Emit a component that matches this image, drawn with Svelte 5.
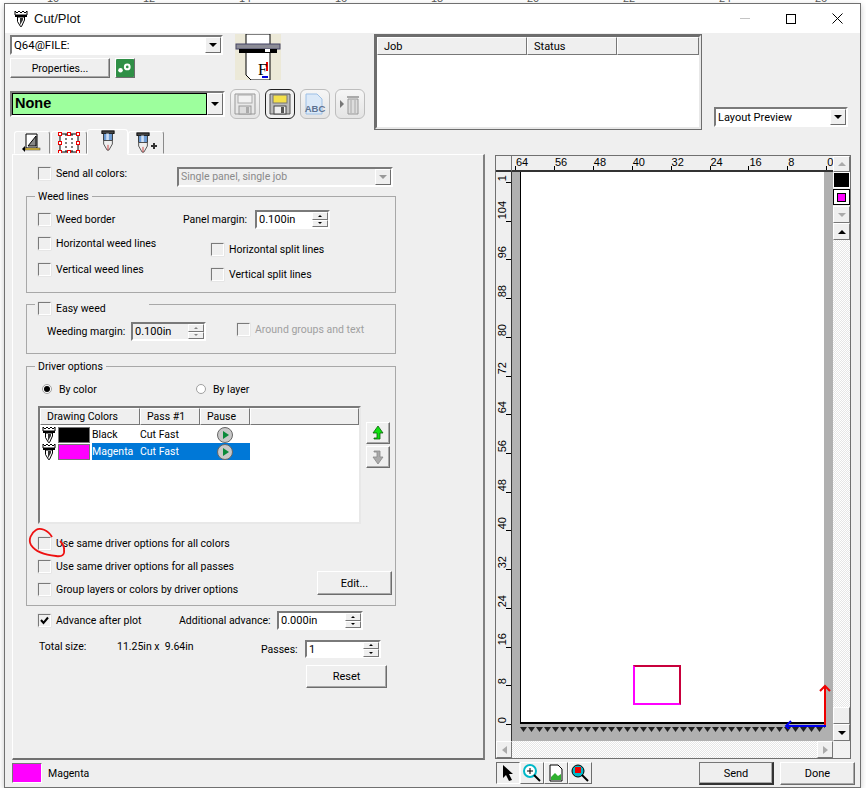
<script>
  const topTicks = [64, 56, 48, 40, 32, 24, 16, 8, 0];
  const sideTicks = ['1', 104, 96, 88, 80, 72, 64, 56, 48, 40, 32, 24, 16, 8, 0];
  const bgLabels = [10, 12, 14, 16, 18, 20, 22, 24, 26];
  const colors = [
    { name: 'Black', color: '#000' },
    { name: 'Magenta', color: '#ff00ff', selected: true }
  ];
</script>

{#snippet check(label, on = false, off = false)}
  <div class="check" class:off>
    <span class="box">
      {#if on}
        <svg width="9" height="9" viewBox="0 0 9 9"><path d="M1 4l2.500 3L8 1.500" fill="none" stroke="#000" stroke-width="2"/></svg>
      {/if}
    </span>
    <span>{label}</span>
  </div>
{/snippet}

{#snippet spin(value, off = false)}
  <div class="spin" class:off>
    <span class="spin-val">{value}</span>
    <span class="spin-btns">
      <span class="spin-btn"><i class="up"></i></span>
      <span class="spin-btn"><i class="down"></i></span>
    </span>
  </div>
{/snippet}

{#snippet knife()}
  <svg width="14" height="17" viewBox="0 0 14 17">
    <path d="M1 1l2 2 2-2 2 2 2-2 2 2 2-2v4H1z" fill="#fff" stroke="#000"/>
    <rect x="1" y="5" width="12" height="2" fill="#000"/>
    <path d="M3.500 7h7v3l-3 6.500h-1l-3-5z" fill="#fff" stroke="#000"/>
    <path d="M6 8v7l3-5V8z" fill="#333"/>
  </svg>
{/snippet}

{#snippet pen()}
  <svg width="14" height="21" viewBox="0 0 16 24">
    <rect x="1" y="1" width="14" height="3" fill="#444" stroke="#000" stroke-width="1"/>
    <rect x="3" y="4" width="10" height="8" fill="#6f9fd8" stroke="#222"/>
    <rect x="6" y="4" width="3" height="8" fill="#cfe0f4"/>
    <path d="M3 12h10v4l-4 7H7l-4-7z" fill="#eee" stroke="#444"/>
    <path d="M8 17v6" stroke="#c33" stroke-width="1"/>
  </svg>
{/snippet}

<div class="bgticks">
  {#each bgLabels as n}<span>{n}</span>{/each}
</div>

<div class="window">
  <div class="titlebar">
    <span class="title-icon">{@render knife()}</span>
    <span class="title">Cut/Plot</span>
    <span class="winbtn min"></span>
    <span class="winbtn"><svg width="10" height="10"><rect x=".5" y=".5" width="9" height="9" fill="none" stroke="#000"/></svg></span>
    <span class="winbtn"><svg width="11" height="11"><path d="M.5.500l10 10M10.500.500l-10 10" stroke="#000"/></svg></span>
  </div>

  <div class="content">
    <div class="top">
      <div class="tools">
        <div class="tools-row">
          <div class="device">
            <div class="combo device-combo"><span class="combo-val">Q64@FILE:</span><span class="arrow-btn"><i class="down big"></i></span></div>
            <div class="device-btns">
              <button class="btn props">Properties...</button>
              <button class="btn gear">
                <svg width="18" height="18" viewBox="0 0 16 16">
                  <rect width="16" height="16" rx="1" fill="#2f8f46"/>
                  <circle cx="10" cy="7" r="3" fill="#fff"/><circle cx="10" cy="7" r="1.200" fill="#2f8f46"/>
                  <circle cx="4" cy="10" r="2" fill="#fff"/>
                </svg>
              </button>
            </div>
          </div>
          <div class="plotter">
            <svg width="46" height="46" viewBox="0 0 46 46">
              <rect width="46" height="46" fill="#ece9d8"/>
              <path d="M11 0h24v46H16l-5-5z" fill="#fff" stroke="#000"/>
              <rect x="1" y="10" width="44" height="5" fill="#8c8c96" stroke="#446"/>
              <rect x="4" y="15" width="38" height="4" fill="#000"/>
              <rect x="30" y="15" width="5" height="3" fill="#fff"/>
              <path d="M32 37v-9" stroke="#e00" stroke-width="2"/>
              <path d="M27 43h6" stroke="#00d" stroke-width="2"/>
            </svg>
            <span class="plotter-f">F</span>
          </div>
        </div>
        <div class="tools-row second">
          <div class="combo none-combo"><span class="none-val">None</span><span class="arrow-btn tall"><i class="down big"></i></span></div>
          <div class="icon-btns">
            <button class="round">
              <svg width="22" height="22" viewBox="0 0 22 22"><path d="M1 1h20v20H1z" fill="#e8e8e8" stroke="#999"/><rect x="4" y="2" width="14" height="8" fill="#f2f2f2" stroke="#aaa"/><rect x="5" y="13" width="12" height="8" fill="#ddd" stroke="#999"/><rect x="12" y="14" width="3" height="6" fill="#aaa"/></svg>
            </button>
            <button class="round active">
              <svg width="22" height="22" viewBox="0 0 22 22"><path d="M1 1h20v20H1z" fill="#bbb" stroke="#555"/><rect x="4" y="2" width="14" height="8" fill="#f4e04a" stroke="#777"/><rect x="5" y="13" width="12" height="8" fill="#eee" stroke="#444"/><rect x="12" y="14" width="3" height="6" fill="#555"/></svg>
            </button>
            <button class="round abc">
              <svg class="abc-page" width="18" height="22" viewBox="0 0 18 22"><path d="M1 1h11l5 5v15H1z" fill="#dbe9f8" stroke="#9dc0e6"/></svg>
              <span class="abc-text">ABC</span>
            </button>
            <button class="round">
              <svg width="22" height="22" viewBox="0 0 22 22"><path d="M1 7l4 4-4 4z" fill="#777"/><rect x="8" y="3" width="12" height="2" fill="#aaa"/><path d="M9 6h10v15H9z" fill="#ddd" stroke="#999"/><path d="M12 7v13M16 7v13" stroke="#aaa"/></svg>
            </button>
          </div>
        </div>
      </div>

      <div class="jobs">
        <div class="jobs-head">
          <span class="hcell job">Job</span><span class="hcell status">Status</span><span class="hcell rest"></span>
        </div>
      </div>

      <div class="combo preview"><span class="combo-val">Layout Preview</span><span class="arrow-btn"><i class="down big"></i></span></div>
    </div>

    <div class="tabs">
      <div class="tab">
        <svg width="20" height="20" viewBox="0 0 20 20">
          <path d="M4 1h11v14H4z" fill="#fff" stroke="#000"/>
          <path d="M14 3L6 13h8z" fill="#888" stroke="#000"/>
          <rect x="3" y="15" width="15" height="2" fill="#e8c33a" stroke="#333" stroke-width=".5"/>
          <path d="M0 16l3-3v6z" fill="#000"/>
        </svg>
      </div>
      <div class="tab t2">
        <svg width="22" height="22" viewBox="0 0 22 22">
          <rect x="2" y="2" width="18" height="18" fill="#fff" stroke="#000"/>
          <path d="M8 2v18M14 2v18" stroke="#000" stroke-dasharray="2 2"/>
          <g fill="#fff" stroke="#e00"><rect x="0.500" y="0.500" width="3" height="3"/><rect x="9.500" y="0.500" width="3" height="3"/><rect x="18.500" y="0.500" width="3" height="3"/><rect x="0.500" y="9.500" width="3" height="3"/><rect x="18.500" y="9.500" width="3" height="3"/><rect x="0.500" y="18.500" width="3" height="3"/><rect x="9.500" y="18.500" width="3" height="3"/><rect x="18.500" y="18.500" width="3" height="3"/></g>
        </svg>
      </div>
      <div class="tab active">{@render pen()}</div>
      <div class="tab t4">
        {@render pen()}
        <svg class="plus" width="8" height="8" viewBox="0 0 8 8"><path d="M4 1v6M1 4h6" stroke="#333" stroke-width="2"/></svg>
      </div>
    </div>

    <div class="main">
      <div class="leftcol">
        <div class="panel">
          <div class="send-row">
            {@render check('Send all colors:')}
            <div class="combo send-combo"><span class="combo-val grey">Single panel, single job</span><span class="arrow-btn dim"><i class="down big"></i></span></div>
          </div>

          <div class="group weed">
            <div class="legend">Weed lines</div>
            <div class="weed-cols">
              <div class="weed-left">
                {@render check('Weed border')}
                {@render check('Horizontal weed lines')}
                {@render check('Vertical weed lines')}
              </div>
              <div class="weed-right">
                <div class="field"><span class="field-label">Panel margin:</span>{@render spin('0.100in')}</div>
                <div class="splits">
                  {@render check('Horizontal split lines')}
                  {@render check('Vertical split lines')}
                </div>
              </div>
            </div>
          </div>

          <div class="group easy">
            <div class="legend check-legend">{@render check('Easy weed')}</div>
            <div class="easy-row">
              <div class="field"><span class="field-label">Weeding margin:</span>{@render spin('0.100in', true)}</div>
              <div class="around">{@render check('Around groups and text', false, true)}</div>
            </div>
          </div>

          <div class="group driver">
            <div class="legend">Driver options</div>
            <div class="radios">
              <div class="radio"><span class="dot on"></span>By color</div>
              <div class="radio"><span class="dot"></span>By layer</div>
            </div>
            <div class="list-row">
              <div class="list">
                <div class="list-head">
                  <span class="hcell c1">Drawing Colors</span><span class="hcell c2">Pass #1</span><span class="hcell c3">Pause</span><span class="hcell rest"></span>
                </div>
                {#each colors as c}
                  <div class="color-row">
                    <span class="row-knife">{@render knife()}</span>
                    <span class="swatch" style="background:{c.color}"></span>
                    <span class="row-sel" class:selected={c.selected}>
                      <span class="row-name">{c.name}</span>
                      <span class="row-pass">Cut Fast</span>
                      <span class="row-pause">
                        <svg width="16" height="16" viewBox="0 0 16 16"><circle cx="8" cy="8" r="7.500" fill="#c8c8c8" stroke="#666"/><path d="M6 4l6 4-6 4z" fill="#0a8a3a"/></svg>
                      </span>
                    </span>
                  </div>
                {/each}
              </div>
              <div class="updown">
                <button class="btn move"><svg width="14" height="16" viewBox="0 0 14 16"><path d="M7 1l5 7H9v6H3v-1h3V8H2z" fill="#10e010" stroke="#0a600a" stroke-width=".8"/></svg></button>
                <button class="btn move"><svg width="14" height="16" viewBox="0 0 14 16"><path d="M7 15l5-7H9V2H3v1h3v5H2z" fill="#aaa" stroke="#888" stroke-width=".8"/></svg></button>
              </div>
            </div>
            <div class="driver-bottom">
              <div class="driver-checks">
                {@render check('Use same driver options for all colors')}
                {@render check('Use same driver options for all passes')}
                {@render check('Group layers or colors by driver options')}
              </div>
              <button class="btn edit">Edit...</button>
            </div>
          </div>

          <div class="advance">
            {@render check('Advance after plot', true)}
            <div class="field"><span class="field-label">Additional advance:</span>{@render spin('0.000in')}</div>
          </div>
          <div class="size-row">
            <span class="size-label">Total size:</span>
            <span class="size-val">11.25in x &nbsp;9.64in</span>
            <div class="field passes"><span class="field-label">Passes:</span>{@render spin('1')}</div>
          </div>
          <button class="btn reset">Reset</button>
        </div>
        <div class="statusbar">
          <span class="status-swatch"></span>
          <span>Magenta</span>
        </div>
      </div>

      <div class="rightcol">
        <div class="frame">
          <div class="corner"></div>
          <div class="ruler-top">
            {#each topTicks as t, i}
              <span class="rt" style="left:{3 + i * 38.9}px"><span>{t}</span></span>
            {/each}
          </div>
          <div class="sidebtns">
            <span class="sb dim"><i class="up big"></i></span>
          </div>

          <div class="ruler-side">
            {#each sideTicks as t, i}
              <span class="rs" style="top:{10 + i * 38.72}px"><span>{t}</span></span>
            {/each}
          </div>
          <div class="canvas">
            <div class="page"></div>
            <svg class="teeth" width="305" height="6"><defs><pattern id="tooth" width="8" height="6" patternUnits="userSpaceOnUse"><path d="M0 0h7L3.500 5z" fill="#222"/></pattern></defs><rect width="305" height="6" fill="url(#tooth)"/></svg>
            <div class="shape"></div>
            <svg class="axes" width="50" height="50" viewBox="0 0 50 50">
              <path d="M43 46V7M38 12l5-5 5 5" fill="none" stroke="#e00" stroke-width="2"/>
              <path d="M44 47H4M9 42l-5 5 5 5" fill="none" stroke="#00e" stroke-width="2"/>
            </svg>
          </div>
          <div class="vscroll">
            <span class="pal black"></span>
            <span class="pal magenta"><i></i></span>
            <span class="sb dim"><i class="down big"></i></span>
            <span class="sb"><i class="up big dark"></i></span>
            <span class="track"></span>
            <span class="sb thumb"></span>
            <span class="sb"><i class="down big"></i></span>
          </div>

          <div class="hscroll">
            <span class="sb h"><i class="left"></i></span>
            <span class="track"></span>
            <span class="sb h"><i class="right"></i></span>
          </div>
          <div class="corner low blank"></div>
        </div>

        <div class="toolbar">
          <div class="tool-btns">
            <button class="tool pressed"><svg width="14" height="18" viewBox="0 0 14 18"><path d="M2 1v13l3-3 3 6 3-1-3-6h4z" fill="#000"/></svg></button>
            <button class="tool"><svg width="20" height="20" viewBox="0 0 20 20"><circle cx="8" cy="8" r="6" fill="#fff" stroke="#00b8c8" stroke-width="2"/><path d="M5 8h6M8 5v6" stroke="#000"/><path d="M12 12l6 6" stroke="#000" stroke-width="2"/></svg></button>
            <button class="tool"><svg width="16" height="18" viewBox="0 0 16 18"><path d="M2 1h8l4 4v12H2z" fill="#fff" stroke="#000"/><path d="M3 13l4-4 3 3 3-2v6H3z" fill="#2fb02f"/></svg></button>
            <button class="tool"><svg width="20" height="20" viewBox="0 0 20 20"><circle cx="8" cy="8" r="6" fill="#00b8c8" stroke="#000"/><rect x="5" y="4" width="6" height="6" fill="#e00"/><path d="M12 12l6 6" stroke="#000" stroke-width="2"/></svg></button>
          </div>
          <button class="btn send">Send</button>
          <button class="btn done">Done</button>
        </div>
      </div>
    </div>

    <svg class="scribble" width="866" height="794" viewBox="0 0 866 794">
      <path d="M52 537C48 530 40 527 36 530C31 533 28 540 31 545C35 551 45 555 56 556C62 557 65 555 64 549C64 546 62 543 60 541" fill="none" stroke="#ee1111" stroke-width="1.800"/>
    </svg>
  </div>
</div>

<style>
  :global(body) {
    margin: 0;
    background: #fff;
    overflow: hidden;
  }

  .bgticks {
    height: 3px;
    overflow: hidden;
    display: flex;
    padding-left: 47px;
    font: 11px/3px "Liberation Sans", sans-serif;
    color: #555;
  }
  .bgticks span {
    width: 96px;
    flex: none;
    transform: translateY(-3px);
  }

  .window {
    margin-left: 4px;
    width: 855px;
    height: 783px;
    border: 1px solid #707070;
    box-shadow: 0 2px 6px rgba(0, 0, 0, .22);
    background: #efefef;
    font: 10.500px/13px Roboto, "Liberation Sans", Arial, sans-serif;
    color: #000;
  }

  .titlebar {
    height: 29px;
    background: #fff;
    display: flex;
    align-items: center;
  }
  .title-icon {
    margin-left: 9px;
    display: flex;
  }
  .title {
    margin-left: 6px;
    font: 13px "Liberation Sans", sans-serif;
    flex: 1;
    color: #111;
  }
  .winbtn {
    width: 46px;
    display: flex;
    justify-content: center;
  }
  .winbtn.min::before {
    content: '';
    width: 10px;
    height: 1px;
    background: #c4c4c4;
  }

  .content {
    position: relative;
  }

  /* shared win32 bits */
  .btn {
    font: inherit;
    font-size: 11px;
    color: #000;
    padding: 0;
    background: #efefef;
    border: 1px solid;
    border-color: #fff #6d6d6d #6d6d6d #fff;
    box-shadow: inset -1px -1px 0 #a8a8a8;
    display: flex;
    align-items: center;
    justify-content: center;
  }
  .combo {
    display: flex;
    align-items: center;
    background: #fff;
    border: 2px solid;
    border-color: #7a7a7a #fff #fff #7a7a7a;
    box-sizing: border-box;
  }
  .combo-val {
    flex: 1;
    padding-left: 2px;
    white-space: nowrap;
  }
  .grey {
    color: #8a8a8a;
  }
  .arrow-btn {
    width: 16px;
    height: 16px;
    box-sizing: border-box;
    background: #efefef;
    border: 1px solid;
    border-color: #fff #6d6d6d #6d6d6d #fff;
    display: flex;
    align-items: center;
    justify-content: center;
  }
  .arrow-btn.tall {
    height: 22px;
  }
  .arrow-btn.dim i {
    border-top-color: #999;
  }
  i {
    display: block;
    width: 0;
    height: 0;
    border: 2px solid transparent;
  }
  i.up {
    border-top: 0;
    border-bottom: 2px solid #000;
  }
  i.down {
    border-bottom: 0;
    border-top: 2px solid #000;
  }
  i.big {
    border-width: 4px;
  }
  i.big.up {
    border-top: 0;
    border-bottom-color: #aaa;
  }
  i.big.up.dark {
    border-bottom-color: #000;
  }
  i.big.down {
    border-bottom: 0;
  }
  .sb.dim i.big.down {
    border-top-color: #aaa;
  }
  i.left {
    border: 4px solid transparent;
    border-left: 0;
    border-right: 5px solid #aaa;
  }
  i.right {
    border: 4px solid transparent;
    border-right: 0;
    border-left: 5px solid #aaa;
  }

  .hcell {
    box-sizing: border-box;
    height: 100%;
    padding-left: 6px;
    display: flex;
    align-items: center;
    background: #efefef;
    border: 1px solid;
    border-color: #fff #777 #777 #fff;
  }
  .hcell.rest {
    flex: 1;
  }

  /* top strip */
  .top {
    height: 97px;
    box-sizing: border-box;
    padding: 2px 0 0 5px;
    display: flex;
  }
  .tools {
    width: 365px;
  }
  .tools-row {
    display: flex;
    margin-top: -1px;
  }
  .tools-row.second {
    margin-top: 11px;
    gap: 5px;
  }
  .device {
    width: 213px;
    padding-top: 1px;
  }
  .device-combo {
    height: 20px;
    font-size: 11.400px;
  }
  .device-btns {
    display: flex;
    gap: 5px;
    margin-top: 3px;
  }
  .props {
    width: 100px;
    height: 20px;
    font-size: 10.500px;
  }
  .gear {
    width: 20px;
    height: 20px;
  }
  .plotter {
    position: relative;
    margin-left: 12px;
    height: 46px;
  }
  .plotter-f {
    position: absolute;
    left: 23px;
    top: 29px;
    font: 16px/14px "Liberation Serif", serif;
  }
  .none-combo {
    width: 215px;
    height: 26px;
    background: #9dff9d;
    border-color: #7a7a7a #fff #fff #7a7a7a;
  }
  .none-val {
    flex: 1;
    height: 22px;
    line-height: 19px;
    box-sizing: border-box;
    border: 1px solid #000;
    padding-left: 2px;
    font-weight: bold;
    font-size: 14.500px;
    font-family: "Liberation Sans", sans-serif;
  }
  .icon-btns {
    display: flex;
    gap: 5px;
    margin-top: -2px;
  }
  .round {
    position: relative;
    width: 30px;
    height: 30px;
    padding: 0;
    border: 1px solid #bdbdbd;
    border-radius: 6px;
    background: linear-gradient(#f6f6f6, #e4e4e4);
    display: flex;
    align-items: center;
    justify-content: center;
  }
  .round.active {
    border: 1px solid #222;
    background: #f0f0f0;
  }
  .abc-page {
    position: absolute;
    left: 4px;
    top: 3px;
  }
  .abc-text {
    position: relative;
    font: bold 9.500px/9px "Liberation Sans", sans-serif;
    color: #5d7290;
    margin-top: 9px;
  }

  .jobs {
    width: 322px;
    height: 90px;
    margin-top: 0;
    background: #fff;
    border: 2px solid;
    border-color: #6d6d6d #e8e8e8 #e8e8e8 #6d6d6d;
    outline: 1px solid #6d6d6d;
  }
  .jobs-head {
    display: flex;
    height: 18px;
    font-size: 11px;
  }
  .hcell.job {
    width: 150px;
  }
  .hcell.status {
    width: 90px;
  }
  .preview {
    width: 134px;
    height: 20px;
    margin: 72px 0 0 13px;
    font-size: 11px;
  }

  /* tabs */
  .tabs {
    height: 24px;
    padding-left: 9px;
    display: flex;
    align-items: flex-end;
  }
  .tab {
    position: relative;
    width: 36px;
    height: 23px;
    box-sizing: border-box;
    border: 1px solid;
    border-color: #fff #8a8a8a transparent #fff;
    border-radius: 3px 3px 0 0;
    display: flex;
    justify-content: center;
    overflow: hidden;
    align-items: center;
  }
  .t2 {
    margin-left: 1px;
  }
  .tab.active {
    width: 41px;
    height: 26px;
    border-right-color: #fff;
    position: relative;
    top: 1px;
    align-items: flex-start;
    background: #efefef;
    z-index: 1;
  }
  .t4 {
    align-items: flex-start;
    padding-right: 6px;
  }
  .plus {
    position: absolute;
    right: 5px;
    bottom: 3px;
  }

  /* left panel */
  .main {
    display: flex;
    height: 632px;
  }
  .leftcol {
    width: 473px;
    margin-left: 7px;
  }
  .panel {
    height: 606px;
    box-sizing: border-box;
    border-top: 1px solid #fff;
    border-left: 1px solid #fff;
    border-right: 2px solid #808080;
    border-bottom: 2px solid #707070;
    padding: 0 0 0 13px;
  }
  .send-row {
    display: grid;
    grid-template-columns: 139px auto;
    grid-template-rows: 19px;
    align-items: center;
    height: 19px;
    margin-top: 9px;
    padding-left: 12px;
  }
  .send-combo {
    width: 216px;
    height: 20px;
    margin-top: 6px;
    background: #efefef;
  }
  .check {
    display: flex;
    align-items: center;
    gap: 5px;
    height: 16px;
    white-space: nowrap;
  }
  .check.off {
    color: #a0a0a0;
  }
  .box {
    width: 11px;
    height: 11px;
    flex: none;
    border: 1px solid;
    border-color: #7a7a7a #fff #fff #7a7a7a;
    background: #efefef;
    box-shadow: 0 0 0 .5px #ddd;
    display: flex;
    align-items: center;
    justify-content: center;
  }

  .group {
    width: 370px;
    box-sizing: border-box;
    border: 1px solid #a8a8a8;
    padding-left: 11px;
  }
  .legend {
    width: fit-content;
    height: 13px;
    margin: -7px 0 0 -3px;
    padding: 0 3px;
    background: #efefef;
  }
  .weed {
    height: 97px;
    margin-top: 13px;
  }
  .weed-cols {
    display: flex;
  }
  .weed-left {
    width: 145px;
    padding-top: 8px;
  }
  .weed-left :global(.check:nth-child(2)) {
    margin-top: 8px;
  }
  .weed-left :global(.check:nth-child(3)) {
    margin-top: 10px;
  }
  .weed-right {
    padding-top: 7px;
  }
  .field {
    display: flex;
    align-items: center;
    gap: 4px;
  }
  .field-label {
    flex: none;
    white-space: nowrap;
  }
  .weed-right .field-label {
    width: 68px;
  }
  .splits {
    margin: 12px 0 0 28px;
    display: flex;
    flex-direction: column;
    gap: 9px;
  }
  .spin {
    width: 75px;
    height: 19px;
    box-sizing: border-box;
    border: 2px solid;
    border-color: #7a7a7a #fff #fff #7a7a7a;
    background: #fff;
    display: flex;
    align-items: center;
    font-size: 11px;
  }
  .spin.off {
    background: #efefef;
  }
  .spin.off i {
    opacity: .45;
  }
  .spin-val {
    flex: 1;
    padding-left: 2px;
  }
  .spin-btns {
    width: 16px;
    height: 15px;
    display: flex;
    flex-direction: column;
  }
  .spin-btn {
    flex: 1;
    background: #efefef;
    border: 1px solid;
    border-color: #fff #777 #777 #fff;
    display: flex;
    align-items: center;
    justify-content: center;
  }

  .easy {
    height: 50px;
    margin-top: 11px;
  }
  .check-legend {
    width: 108px;
    height: 16px;
    margin-top: -5px;
  }
  .easy-row {
    display: flex;
    align-items: flex-start;
    margin-top: 6px;
    padding-left: 9px;
    gap: 31px;
  }
  .easy-row .field-label {
    width: 80px;
  }
  .around {
    margin-top: -1px;
  }

  .driver {
    height: 240px;
    margin-top: 12px;
  }
  .radios {
    display: flex;
    margin-top: 8px;
    padding-left: 4px;
    height: 16px;
  }
  .radio {
    width: 154px;
    display: flex;
    align-items: center;
    gap: 7px;
  }
  .dot {
    width: 10px;
    height: 10px;
    border-radius: 50%;
    background: #fff;
    border: 1px solid #a0a0a0;
    box-sizing: border-box;
    display: flex;
    align-items: center;
    justify-content: center;
  }
  .dot.on::before {
    content: '';
    width: 6px;
    height: 6px;
    border-radius: 50%;
    background: #000;
  }
  .list-row {
    display: flex;
    margin-top: 9px;
    gap: 5px;
  }
  .list {
    width: 323px;
    height: 118px;
    box-sizing: border-box;
    background: #fff;
    border: 2px solid;
    border-color: #7a7a7a #e8e8e8 #e8e8e8 #7a7a7a;
  }
  .list-head {
    display: flex;
    height: 17px;
    margin-bottom: 1px;
  }
  .c1 {
    width: 100px;
  }
  .c2 {
    width: 60px;
  }
  .c3 {
    width: 50px;
  }
  .color-row {
    display: flex;
    align-items: center;
    height: 17px;
  }
  .row-knife {
    width: 18px;
    display: flex;
    justify-content: center;
  }
  .swatch {
    width: 30px;
    height: 14px;
    border: 1px solid #777;
    margin-right: 2px;
  }
  .row-sel {
    display: flex;
    align-items: center;
    height: 17px;
    width: 158px;
  }
  .row-sel.selected {
    background: #0078d7;
    color: #fff;
  }
  .row-name {
    width: 48px;
  }
  .row-pass {
    width: 77px;
  }
  .row-pause {
    display: flex;
  }
  .updown {
    display: flex;
    flex-direction: column;
    gap: 2px;
    margin-top: 16px;
  }
  .move {
    width: 24px;
    height: 22px;
  }
  .driver-bottom {
    display: flex;
    margin-top: 11px;
  }
  .driver-checks {
    display: flex;
    flex-direction: column;
    gap: 7px;
    width: 279px;
  }
  .edit {
    width: 75px;
    height: 24px;
    margin-top: 36px;
  }

  .advance {
    display: grid;
    grid-template-columns: 141px auto;
    align-items: center;
    margin-top: 5px;
    padding-left: 12px;
    height: 19px;
  }
  .advance .field-label {
    width: 94px;
  }
  .advance :global(.spin) {
    width: 86px;
  }
  .size-row {
    display: flex;
    align-items: center;
    height: 18px;
    margin-top: 7px;
    padding-left: 13px;
  }
  .size-label {
    width: 78px;
  }
  .size-val {
    width: 144px;
  }
  .passes {
    gap: 9px;
    margin-top: 6px;
  }
  .passes .field-label {
    width: 35px;
  }
  .passes :global(.spin) {
    width: 76px;
    height: 18px;
  }
  .reset {
    width: 81px;
    height: 23px;
    margin: 10px 0 0 280px;
  }

  .statusbar {
    height: 26px;
    display: flex;
    align-items: center;
    gap: 6px;
  }
  .status-swatch {
    width: 30px;
    height: 20px;
    box-sizing: border-box;
    background: #ff00ff;
    border: 1px solid;
    border-color: #777 #fff #fff #777;
  }

  /* right side */
  .rightcol {
    margin-left: 10px;
    padding-top: 1px;
  }
  .frame {
    width: 354px;
    height: 602px;
    border: 1px solid #707070;
    display: grid;
    grid-template-columns: 16px 321px 17px;
    grid-template-rows: 16px 569px 17px;
    background: #f2f2f2;
  }
  .corner {
    background: #efefef;
    border-bottom: 2px solid #333;
    border-right: 1px solid #777;
    box-sizing: border-box;
  }
  .corner.low {
    border: 0;
  }
  .corner.blank {
    background: #f2f2f2;
  }
  .ruler-top {
    position: relative;
    overflow: hidden;
    background: #efefef;
    border-bottom: 2px solid #333;
    font: 11px/12px "Liberation Sans", sans-serif;
  }
  .rt {
    position: absolute;
    top: 10px;
    width: 1px;
    height: 5px;
    background: #000;
  }
  .rt span {
    position: absolute;
    left: 1px;
    top: -10px;
  }
  .ruler-side {
    position: relative;
    overflow: hidden;
    background: #efefef;
    border-right: 1px solid #333;
    font: 11px/12px "Liberation Sans", sans-serif;
  }
  .rs {
    position: absolute;
    left: 10px;
    width: 5px;
    height: 1px;
    background: #000;
  }
  .rs span {
    position: absolute;
    right: 3px;
    bottom: 2px;
    writing-mode: vertical-rl;
    transform: rotate(180deg);
    line-height: 12px;
  }
  .canvas {
    position: relative;
    background: #b0b0b0;
    overflow: hidden;
  }
  .page {
    width: 304px;
    height: 552px;
    margin-left: 8px;
    box-sizing: border-box;
    background: #fff;
    border-left: 1px solid #000;
    border-bottom: 2px solid #000;
  }
  .teeth {
    display: block;
    margin: 3px 0 0 8px;
  }
  .shape {
    position: absolute;
    left: 121px;
    top: 493px;
    width: 48px;
    height: 40px;
    box-sizing: border-box;
    border: 2px solid;
    border-color: #c8003c #c8003c #ff00ff #ff00ff;
  }
  .axes {
    position: absolute;
    left: 270px;
    top: 507px;
  }
  .sidebtns {
    display: flex;
  }
  .sb {
    width: 17px;
    height: 16px;
    box-sizing: border-box;
    flex: none;
    background: #efefef;
    border: 1px solid;
    border-color: #fff #777 #777 #fff;
    display: flex;
    align-items: center;
    justify-content: center;
  }
  .vscroll {
    display: flex;
    flex-direction: column;
    background: #efefef;
  }
  .pal {
    width: 17px;
    height: 16px;
    box-sizing: border-box;
    margin-bottom: 1px;
    flex: none;
  }
  .pal.black {
    background: #000;
    border: 1px solid #fff;
  }
  .pal.magenta {
    background: #fff;
    border: 1px solid #000;
    display: flex;
    align-items: center;
    justify-content: center;
  }
  .pal.magenta i {
    width: 9px;
    height: 9px;
    background: #ff00ff;
    border: 1px solid #000;
    box-sizing: border-box;
  }
  .vscroll .sb {
    height: 17px;
  }
  .track {
    flex: 1;
    background: repeating-conic-gradient(#fff 0 25%, #e6e6e6 0 50%) 0 0 / 2px 2px;
  }
  .hscroll {
    display: flex;
    grid-column: 1 / 3;
  }
  .sb.h {
    width: 16px;
    height: 17px;
  }
  .toolbar {
    display: flex;
    margin-top: 3px;
    padding-left: 1px;
  }
  .tool-btns {
    display: flex;
    width: 203px;
  }
  .tool {
    width: 24px;
    height: 22px;
    padding: 0;
    background: #efefef;
    border: 1px solid;
    border-color: #fff #6d6d6d #6d6d6d #fff;
    display: flex;
    align-items: center;
    justify-content: center;
  }
  .tool.pressed {
    border-color: #6d6d6d #fff #fff #6d6d6d;
  }
  .send, .done {
    width: 75px;
    height: 23px;
  }
  .send {
    border-right-width: 2px;
    border-bottom-width: 2px;
    border-color: #777 #333 #333 #777;
  }
  .done {
    margin-left: 6px;
  }

  .scribble {
    position: absolute;
    left: -5px;
    top: -33px;
    pointer-events: none;
  }
</style>
